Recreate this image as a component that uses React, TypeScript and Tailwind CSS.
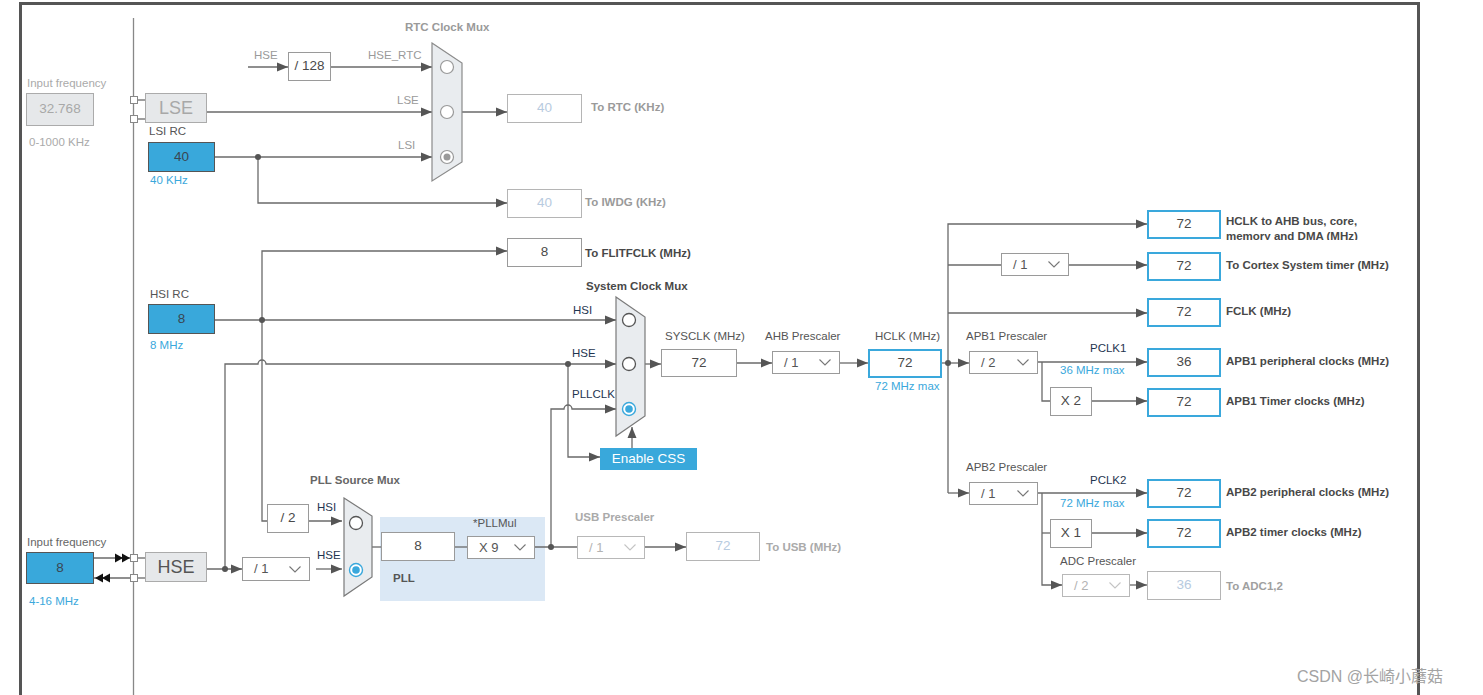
import type { ReactNode } from "react";
import clsx from "clsx";
import { twMerge } from "tailwind-merge";

const cn = (...a: Parameters<typeof clsx>) => twMerge(clsx(a));

// wire paths of the clock tree (canvas coordinates)
const wires = [
  "M248 67 H288",
  "M331 67 H432",
  "M137 100 H145",
  "M137 119 H145",
  "M207 112 H432",
  "M215 157 H432",
  "M258 157 V203 H507",
  "M462 112 H507",
  "M267 521 H262 V251 H507",
  "M215 320 H616",
  "M225 569 V364 H258 A4 4 0 0 1 266 364 H616",
  "M568 364 V457 H600",
  "M551 547 V409 H564 A4 4 0 0 1 572 409 H616",
  "M535 547 H577",
  "M372 547 H381",
  "M455 547 H467",
  "M207 569 H242",
  "M316 569 H342",
  "M309 521 H342",
  "M645 547 H686",
  "M645 364 H661",
  "M737 363 H772",
  "M840 363 H868",
  "M632 448 V427",
  "M942 363 H969",
  "M948 493 V224 H1147",
  "M948 493 H969",
  "M948 265 H1001",
  "M1069 265 H1147",
  "M948 313 H1147",
  "M1038 362 H1147",
  "M1042 362 V401 H1050",
  "M1092 401 H1147",
  "M1038 493 H1147",
  "M1042 493 V585 H1062",
  "M1042 533 H1050",
  "M1092 533 H1147",
  "M1130 585 H1147",
  "M94 558 H130",
  "M94 578 H130",
  "M137 558 H145",
  "M137 578 H145",
];

const arrows: [number, number][] = [
  [288, 67], [432, 67], [432, 112], [432, 157], [507, 203], [507, 112], [507, 251],
  [616, 320], [616, 364], [600, 457], [616, 409], [242, 569], [342, 569], [342, 521],
  [686, 547], [661, 364], [772, 363], [868, 363], [969, 363], [1147, 224], [969, 493],
  [1147, 265], [1147, 313], [1147, 362], [1147, 401], [1147, 493], [1062, 585],
  [1147, 533], [1147, 585],
];

const dots: [number, number][] = [
  [258, 157], [262, 320], [568, 364], [551, 547], [225, 569], [948, 363],
];

function Chevron() {
  return (
    <svg width="12" height="7" viewBox="0 0 12 7">
      <polyline points="0.5,0.5 6,6 11.5,0.5" fill="none" stroke="currentColor" strokeWidth="1.1" />
    </svg>
  );
}

function Select({ className, value, disabled }: { className: string; value: string; disabled?: boolean }) {
  return (
    <div
      className={cn(
        "flex items-center justify-between border bg-white pl-[11px] pr-[8px] text-[13px]",
        disabled ? "border-[#b8b8b8] text-[#b3b3b3]" : "border-[#9a9a9a] text-[#555]",
        className,
      )}
    >
      <span>{value}</span>
      <span className={disabled ? "text-[#c4c4c4]" : "text-[#777]"}>
        <Chevron />
      </span>
    </div>
  );
}

type Tone = "plain" | "out" | "off" | "blue" | "gray";

const tones: Record<Tone, string> = {
  plain: "border border-[#9a9a9a] bg-white text-[#4a4a4a]",
  out: "border-2 border-[#3aa8dc] bg-white text-[#4a4a4a]",
  off: "border border-[#b5b5b5] bg-white text-[#b8cbe0]",
  blue: "border border-[#555] bg-[#39a8db] text-[#3a4652]",
  gray: "border border-[#ababab] bg-[#e6e8ea] text-[#a8a8a8]",
};

function Val({ className, tone = "plain", children }: { className: string; tone?: Tone; children: ReactNode }) {
  return (
    <div className={cn("flex shrink-0 items-center justify-center text-[13.5px]", tones[tone], className)}>
      {children}
    </div>
  );
}

function Label({ className, children }: { className?: string; children: ReactNode }) {
  return <div className={cn("whitespace-nowrap text-[11.5px] leading-[14px]", className)}>{children}</div>;
}

// one output line on the right: highlighted value + bold caption
function Output({ className, value, children }: { className: string; value: string; children: ReactNode }) {
  return (
    <div className={cn("absolute left-[1147px] flex items-center gap-[5px]", className)}>
      <Val tone="out" className="h-[29px] w-[74px]">{value}</Val>
      <Label className="pb-[3px] font-bold text-[#484848]">{children}</Label>
    </div>
  );
}

export default function App() {
  return (
    <div className="relative h-[695px] w-[1483px] overflow-hidden bg-white font-['Liberation_Sans',Arial,sans-serif]">
      {/* outer frame */}
      <div className="absolute left-[19px] top-[2px] h-[720px] w-[1401px] border-l-[3px] border-r-[3px] border-t-[3px] border-[#555]" />

      {/* PLL block background */}
      <div className="absolute left-[380px] top-[517px] h-[84px] w-[165px] bg-[#dbe8f5]" />

      {/* wires, muxes, arrows */}
      <svg className="absolute inset-0" width="1483" height="695">
        <line x1="133.5" y1="18" x2="133.5" y2="695" stroke="#888" strokeWidth="1.3" />
        <g fill="none" stroke="#6a6a6a" strokeWidth="1.3">
          {wires.map((d) => (
            <path key={d} d={d} />
          ))}
        </g>
        <g fill="#555">
          {arrows.map(([x, y]) => (
            <polygon key={`${x}-${y}`} points={`${x - 11},${y - 4.5} ${x},${y} ${x - 11},${y + 4.5}`} />
          ))}
          <polygon points="627.5,438 632,427 636.5,438" />
          {dots.map(([x, y]) => (
            <circle key={`${x}-${y}`} cx={x} cy={y} r="3" />
          ))}
        </g>
        {/* double arrowheads on the HSE oscillator pins */}
        <g fill="#111">
          <polygon points="115,553.5 123,558 115,562.5" />
          <polygon points="122,553.5 130,558 122,562.5" />
          <polygon points="103,573.5 95,578 103,582.5" />
          <polygon points="110,573.5 102,578 110,582.5" />
        </g>
        <g fill="#fff" stroke="#888" strokeWidth="1">
          <rect x="130.5" y="96.5" width="7" height="7" />
          <rect x="130.5" y="115.5" width="7" height="7" />
          <rect x="130.5" y="554.5" width="7" height="7" />
          <rect x="130.5" y="574.5" width="7" height="7" />
        </g>

        {/* RTC clock mux */}
        <polygon points="432,43 462,63 462,162 432,181" fill="#e9ecef" stroke="#8a8a8a" strokeWidth="1.2" />
        <g fill="#fff" stroke="#999" strokeWidth="1.2">
          <circle cx="447" cy="67" r="6.5" />
          <circle cx="447" cy="112" r="6.5" />
          <circle cx="447" cy="157" r="6.5" />
        </g>
        <circle cx="447" cy="157" r="3.5" fill="#9a9a9a" />

        {/* System clock mux */}
        <polygon points="616,297 645,317 645,416 616,436" fill="#e9ecef" stroke="#7a7a7a" strokeWidth="1.2" />
        <g fill="#fff" stroke="#555" strokeWidth="1.3">
          <circle cx="629" cy="320" r="6.5" />
          <circle cx="629" cy="364" r="6.5" />
        </g>
        <circle cx="629" cy="409" r="6.5" fill="#fff" stroke="#3aa8dc" strokeWidth="1.4" />
        <circle cx="629" cy="409" r="3.8" fill="#3aa8dc" />

        {/* PLL source mux */}
        <polygon points="344,498 372,516 372,577 344,596" fill="#e9ecef" stroke="#7a7a7a" strokeWidth="1.2" />
        <circle cx="356" cy="523" r="6.5" fill="#fff" stroke="#555" strokeWidth="1.3" />
        <circle cx="356" cy="570" r="6.5" fill="#fff" stroke="#3aa8dc" strokeWidth="1.4" />
        <circle cx="356" cy="570" r="3.8" fill="#3aa8dc" />
      </svg>

      {/* ── low speed / RTC ── */}
      <Label className="absolute left-[405px] top-[20px] font-bold text-[#9a9a9a]">RTC Clock Mux</Label>
      <Label className="absolute left-[254px] top-[48px] text-[#9a9a9a]">HSE</Label>
      <Label className="absolute left-[368px] top-[48px] text-[#9a9a9a]">HSE_RTC</Label>
      <Label className="absolute left-[397px] top-[93px] text-[#9a9a9a]">LSE</Label>
      <Label className="absolute left-[398px] top-[138px] text-[#9a9a9a]">LSI</Label>
      <Val className="absolute left-[288px] top-[52px] h-[29px] w-[43px]">/ 128</Val>

      <div className="absolute left-[26px] top-[76px] flex flex-col">
        <Label className="pl-[1px] text-[#aaa]">Input frequency</Label>
        <Val tone="gray" className="mt-[3px] h-[33px] w-[68px]">32.768</Val>
        <Label className="mt-[9px] pl-[3px] text-[#aaa]">0-1000 KHz</Label>
      </div>
      <Val tone="gray" className="absolute left-[145px] top-[93px] h-[30px] w-[62px] text-[18px]">LSE</Val>

      <div className="absolute left-[148px] top-[124px] flex flex-col">
        <Label className="pl-[1px] text-[#555]">LSI RC</Label>
        <Val tone="blue" className="mt-[4px] h-[30px] w-[67px]">40</Val>
        <Label className="mt-[1px] pl-[2px] text-[#3aa8dc]">40 KHz</Label>
      </div>

      <div className="absolute left-[507px] top-[94px] flex items-center gap-[9px]">
        <Val tone="off" className="h-[29px] w-[75px]">40</Val>
        <Label className="pb-[3px] font-bold text-[#9a9a9a]">To RTC (KHz)</Label>
      </div>
      <div className="absolute left-[507px] top-[189px] flex items-center gap-[3px]">
        <Val tone="off" className="h-[29px] w-[75px]">40</Val>
        <Label className="pb-[3px] font-bold text-[#9a9a9a]">To IWDG (KHz)</Label>
      </div>
      <div className="absolute left-[507px] top-[238px] flex items-center gap-[3px]">
        <Val className="h-[29px] w-[75px]">8</Val>
        <Label className="font-bold text-[#484848]">To FLITFCLK (MHz)</Label>
      </div>

      {/* ── HSI / system clock ── */}
      <div className="absolute left-[148px] top-[287px] flex flex-col">
        <Label className="pl-[2px] text-[#555]">HSI RC</Label>
        <Val tone="blue" className="mt-[3px] h-[30px] w-[67px]">8</Val>
        <Label className="mt-[4px] pl-[2px] text-[#3aa8dc]">8 MHz</Label>
      </div>

      <Label className="absolute left-[586px] top-[279px] font-bold text-[#484848]">System Clock Mux</Label>
      <Label className="absolute left-[573px] top-[303px] text-[#1f3550]">HSI</Label>
      <Label className="absolute left-[572px] top-[346px] text-[#1f3550]">HSE</Label>
      <Label className="absolute left-[572px] top-[387px] text-[#1f3550]">PLLCLK</Label>
      <div className="absolute left-[600px] top-[448px] flex h-[22px] w-[97px] items-center justify-center bg-[#39a8db] text-[13.5px] text-white">
        Enable CSS
      </div>

      <div className="absolute left-[661px] top-[329px] flex flex-col">
        <Label className="pl-[4px] text-[#555]">SYSCLK (MHz)</Label>
        <Val className="mt-[6px] h-[28px] w-[76px]">72</Val>
      </div>
      <div className="absolute left-[765px] top-[329px] flex flex-col">
        <Label className="text-[#555]">AHB Prescaler</Label>
        <Select className="ml-[7px] mt-[8px] h-[23px] w-[68px]" value="/ 1" />
      </div>
      <div className="absolute left-[868px] top-[329px] flex flex-col">
        <Label className="pl-[7px] text-[#555]">HCLK (MHz)</Label>
        <Val tone="out" className="mt-[6px] h-[29px] w-[74px]">72</Val>
        <Label className="mt-[1px] pl-[7px] text-[#3aa8dc]">72 MHz max</Label>
      </div>

      {/* ── bus clocks ── */}
      <Val tone="out" className="absolute left-[1147px] top-[210px] h-[29px] w-[74px]">72</Val>
      <div className="absolute left-[1226px] top-[214px] h-[26px] overflow-hidden whitespace-nowrap text-[11.5px] font-bold leading-[15px] text-[#484848]">
        <div>HCLK to AHB bus, core,</div>
        <div>memory and DMA (MHz)</div>
      </div>
      <Select className="absolute left-[1001px] top-[253px] h-[23px] w-[68px]" value="/ 1" />
      <Output className="top-[252px]" value="72">To Cortex System timer (MHz)</Output>
      <Output className="top-[298px]" value="72">FCLK (MHz)</Output>

      <div className="absolute left-[966px] top-[329px] flex flex-col">
        <Label className="text-[#555]">APB1 Prescaler</Label>
        <Select className="ml-[3px] mt-[8px] h-[23px] w-[69px]" value="/ 2" />
      </div>
      <Label className="absolute left-[1090px] top-[341px] text-[#1f3550]">PCLK1</Label>
      <Label className="absolute left-[1060px] top-[363px] text-[#3aa8dc]">36 MHz max</Label>
      <Output className="top-[348px]" value="36">APB1 peripheral clocks (MHz)</Output>
      <Val className="absolute left-[1050px] top-[387px] h-[29px] w-[42px]">X 2</Val>
      <Output className="top-[388px]" value="72">APB1 Timer clocks (MHz)</Output>

      <div className="absolute left-[966px] top-[460px] flex flex-col">
        <Label className="text-[#555]">APB2 Prescaler</Label>
        <Select className="ml-[3px] mt-[8px] h-[23px] w-[69px]" value="/ 1" />
      </div>
      <Label className="absolute left-[1090px] top-[473px] text-[#1f3550]">PCLK2</Label>
      <Label className="absolute left-[1060px] top-[496px] text-[#3aa8dc]">72 MHz max</Label>
      <Output className="top-[479px]" value="72">APB2 peripheral clocks (MHz)</Output>
      <Val className="absolute left-[1050px] top-[519px] h-[29px] w-[42px]">X 1</Val>
      <Output className="top-[519px]" value="72">APB2 timer clocks (MHz)</Output>
      <div className="absolute left-[1060px] top-[554px] flex flex-col">
        <Label className="text-[#555]">ADC Prescaler</Label>
        <Select disabled className="ml-[2px] mt-[6px] h-[23px] w-[68px]" value="/ 2" />
      </div>
      <div className="absolute left-[1147px] top-[571px] flex items-center gap-[5px]">
        <Val tone="off" className="h-[29px] w-[74px]">36</Val>
        <Label className="font-bold text-[#a0a0a0]">To ADC1,2</Label>
      </div>

      {/* ── HSE / PLL ── */}
      <div className="absolute left-[26px] top-[535px] flex flex-col">
        <Label className="pl-[1px] text-[#666]">Input frequency</Label>
        <Val tone="blue" className="mt-[3px] h-[32px] w-[68px]">8</Val>
        <Label className="mt-[10px] pl-[3px] text-[#3aa8dc]">4-16 MHz</Label>
      </div>
      <Val tone="gray" className="absolute left-[145px] top-[552px] h-[30px] w-[62px] text-[18px] text-[#555]">HSE</Val>
      <Select className="absolute left-[242px] top-[557px] h-[24px] w-[68px]" value="/ 1" />
      <Val className="absolute left-[267px] top-[504px] h-[29px] w-[42px]">/ 2</Val>

      <Label className="absolute left-[310px] top-[473px] font-bold text-[#666]">PLL Source Mux</Label>
      <Label className="absolute left-[317px] top-[500px] text-[#1f3550]">HSI</Label>
      <Label className="absolute left-[317px] top-[548px] text-[#1f3550]">HSE</Label>

      <Label className="absolute left-[473px] top-[516px] text-[#555]">*PLLMul</Label>
      <Val className="absolute left-[381px] top-[532px] h-[29px] w-[74px]">8</Val>
      <Select className="absolute left-[467px] top-[536px] h-[23px] w-[68px]" value="X 9" />
      <Label className="absolute left-[393px] top-[571px] font-bold text-[#555]">PLL</Label>

      <div className="absolute left-[575px] top-[510px] flex flex-col">
        <Label className="font-bold text-[#aaa]">USB Prescaler</Label>
        <Select disabled className="ml-[2px] mt-[12px] h-[23px] w-[68px]" value="/ 1" />
      </div>
      <div className="absolute left-[686px] top-[532px] flex items-center gap-[6px]">
        <Val tone="off" className="h-[29px] w-[74px]">72</Val>
        <Label className="font-bold text-[#aaa]">To USB (MHz)</Label>
      </div>

      <div className="absolute left-[1297px] top-[666px] whitespace-nowrap font-['Liberation_Sans','Noto_Sans_CJK_SC',sans-serif] text-[16px] leading-[22px] text-[#a3a3a3]">
        CSDN @长崎小蘑菇
      </div>
    </div>
  );
}
